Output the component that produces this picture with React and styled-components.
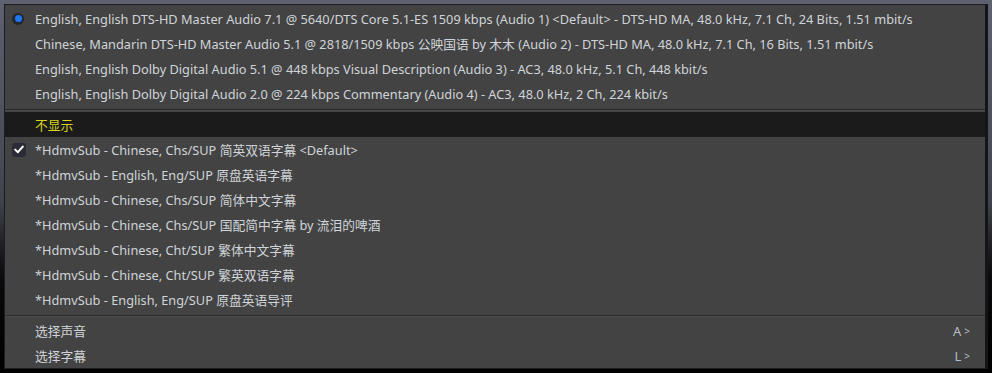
import React from "react";
import styled, { createGlobalStyle } from "styled-components";

const Global = createGlobalStyle`
  html, body { margin: 0; padding: 0; background: #000; }
  #root { width: 992px; height: 373px; }
`;

const Page = styled.div`
  width: 992px;
  height: 373px;
  box-sizing: border-box;
  padding: 4px 4px 4px 4px;
  background:
    linear-gradient(to bottom, rgba(0,0,0,0) 0%, rgba(0,0,0,0) 55%, #0a0a0c 75%, #000 100%),
    linear-gradient(to bottom, #5d6170 0%, #4a4d58 40%, #34363c 70%, #121214 100%);
  overflow: hidden;
`;

const Menu = styled.div`
  width: 984px;
  height: 365px;
  box-sizing: border-box;
  background: #434343;
  border: 1px solid #1d1d1f;
  border-right: 3px solid #151517;
  display: flex;
  flex-direction: column;
  padding-top: 1px;
  font-family: "Noto Sans", "Noto Sans CJK SC", sans-serif;
  font-size: 12.75px;
  color: #d0d4d8;
`;

const Item = styled.div`
  height: 25px;
  flex: 0 0 25px;
  display: grid;
  grid-template-columns: 30px 1fr auto;
  align-items: center;
  background: ${(p) => (p.$hover ? "#1b1b1b" : "transparent")};
  color: ${(p) => (p.$hover ? "#d9d51c" : "inherit")};
  padding-right: 15px;
  white-space: nowrap;
`;

const Gutter = styled.div`
  display: flex;
  align-items: center;
  padding-left: ${(p) => p.$pad || 7}px;
`;

const Label = styled.span`
  overflow: hidden;
`;

const Shortcut = styled.span`
  color: #b6bcc4;
  font-size: 13px;
  display: flex;
  align-items: center;
  gap: 3px;
`;

const Arrow = styled.span`
  font-size: 10px;
`;

const Separator = styled.div`
  height: 6px;
  flex: 0 0 6px;
  display: flex;
  align-items: center;
  &::before {
    content: "";
    display: block;
    width: 100%;
    height: 1px;
    background: #2a2a2c;
    box-shadow: 0 1px 0 #4b4b4d;
  }
`;

const Radio = styled.span`
  width: 12px;
  height: 12px;
  border-radius: 50%;
  background: #26262d;
  display: flex;
  align-items: center;
  justify-content: center;
  &::after {
    content: "";
    width: 7px;
    height: 7px;
    border-radius: 50%;
    background: #1f77f5;
  }
`;

const Check = styled.span`
  width: 14px;
  height: 14px;
  border-radius: 3px;
  background: #2c2c36;
  display: flex;
  align-items: center;
  justify-content: center;
`;

const audio = [
  "English, English DTS-HD Master Audio 7.1 @ 5640/DTS Core 5.1-ES 1509 kbps (Audio 1) <Default> - DTS-HD MA, 48.0 kHz, 7.1 Ch, 24 Bits, 1.51 mbit/s",
  "Chinese, Mandarin DTS-HD Master Audio 5.1 @ 2818/1509 kbps 公映国语 by 木木 (Audio 2) - DTS-HD MA, 48.0 kHz, 7.1 Ch, 16 Bits, 1.51 mbit/s",
  "English, English Dolby Digital Audio 5.1 @ 448 kbps Visual Description (Audio 3) - AC3, 48.0 kHz, 5.1 Ch, 448 kbit/s",
  "English, English Dolby Digital Audio 2.0 @ 224 kbps Commentary (Audio 4) - AC3, 48.0 kHz, 2 Ch, 224 kbit/s",
];

const subs = [
  "*HdmvSub - Chinese, Chs/SUP 简英双语字幕 <Default>",
  "*HdmvSub - English, Eng/SUP 原盘英语字幕",
  "*HdmvSub - Chinese, Chs/SUP 简体中文字幕",
  "*HdmvSub - Chinese, Chs/SUP 国配简中字幕 by 流泪的啤酒",
  "*HdmvSub - Chinese, Cht/SUP 繁体中文字幕",
  "*HdmvSub - Chinese, Cht/SUP 繁英双语字幕",
  "*HdmvSub - English, Eng/SUP 原盘英语导评",
];

export default function App() {
  return (
    <>
      <Global />
      <Page>
        <Menu>
          {audio.map((t, i) => (
            <Item key={t}>
              <Gutter>{i === 0 && <Radio />}</Gutter>
              <Label>{t}</Label>
              <span />
            </Item>
          ))}
          <Separator />
          <Item $hover>
            <Gutter />
            <Label>不显示</Label>
            <span />
          </Item>
          {subs.map((t, i) => (
            <Item key={t}>
              <Gutter>
                {i === 0 && (
                  <Check>
                    <svg width="10" height="9" viewBox="0 0 10 9">
                      <path d="M1.2 4.6 L3.9 7.2 L8.8 1.6" fill="none" stroke="#fff" strokeWidth="2" strokeLinecap="round" strokeLinejoin="round" />
                    </svg>
                  </Check>
                )}
              </Gutter>
              <Label>{t}</Label>
              <span />
            </Item>
          ))}
          <Separator />
          <Item>
            <Gutter />
            <Label>选择声音</Label>
            <Shortcut>A<Arrow>&gt;</Arrow></Shortcut>
          </Item>
          <Item>
            <Gutter />
            <Label>选择字幕</Label>
            <Shortcut>L<Arrow>&gt;</Arrow></Shortcut>
          </Item>
        </Menu>
      </Page>
    </>
  );
}
